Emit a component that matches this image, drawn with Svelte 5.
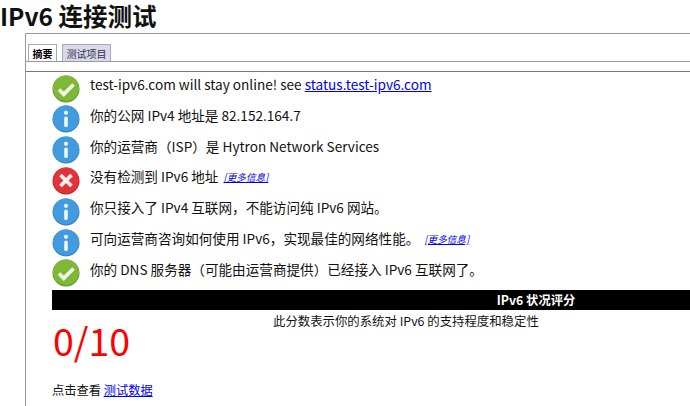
<script>
  const rows = [
    { icon: 'ok', text: 'test-ipv6.com will stay online! see ', link: 'status.test-ipv6.com' },
    { icon: 'info', text: '你的公网 IPv4 地址是 82.152.164.7' },
    { icon: 'info', text: '你的运营商（ISP）是 Hytron Network Services' },
    { icon: 'bad', text: '没有检测到 IPv6 地址', more: true },
    { icon: 'info', text: '你只接入了 IPv4 互联网，不能访问纯 IPv6 网站。' },
    { icon: 'info', text: '可向运营商咨询如何使用 IPv6，实现最佳的网络性能。', more: true },
    { icon: 'ok', text: '你的 DNS 服务器（可能由运营商提供）已经接入 IPv6 互联网了。' }
  ];
  const fills = { ok: '#7fb836', info: '#439bdf', bad: '#e4323a' };
  const shades = { ok: '#5f9427', info: '#2f7fc0', bad: '#bd1f25' };
</script>

<h1>IPv6 连接测试</h1>

<div class="panel">
  <ul class="tabs">
    <li class="tab active">摘要</li>
    <li class="tab">测试项目</li>
  </ul>
  <div class="content">
    {#each rows as row}
      <div class="row">
        <svg class="icon" viewBox="0 0 28 28" width="28" height="28">
          <circle cx="14" cy="14" r="13.5" fill={shades[row.icon]} />
          <circle cx="14" cy="13.4" r="13" fill={fills[row.icon]} />
          {#if row.icon === 'ok'}
            <path d="M7 14.5l4.8 4.8L21.5 9.5" fill="none" stroke="#f1f6ea" stroke-width="3.8" />
          {:else if row.icon === 'info'}
            <circle cx="14" cy="7.8" r="2.1" fill="#eef6fc" />
            <rect x="12.2" y="11.5" width="3.6" height="10.5" rx="1.6" fill="#eef6fc" />
          {:else}
            <path d="M8.5 8l11 11M19.5 8l-11 11" fill="none" stroke="#fdf0f0" stroke-width="3.8" />
          {/if}
        </svg>
        <span class="text">{row.text}{#if row.link}<a href="#top">{row.link}</a>{/if}</span>
        {#if row.more}<a class="more" href="#top">[更多信息]</a>{/if}
      </div>
    {/each}

    <div class="bar">IPv6 状况评分</div>
    <div class="score">
      <div class="num">0/10</div>
      <div class="desc">此分数表示你的系统对 IPv6 的支持程度和稳定性</div>
    </div>
    <p class="foot">点击查看 <a href="#top">测试数据</a></p>
  </div>
</div>

<style>
  :global(body) {
    margin: 0;
    background: #fff;
    overflow: hidden;
    font-family: "Noto Sans CJK SC", sans-serif;
    color: #111;
  }

  h1 {
    margin: 0;
    height: 33px;
    font-size: 24.5px;
    line-height: 31px;
    font-weight: 700;
    color: #111;
    white-space: nowrap;
  }

  .panel {
    width: 994px;
    margin-left: 25px;
    border-left: 1px solid #999;
    border-top: 1px solid #999;
    height: 373px;
  }

  .tabs {
    display: flex;
    gap: 5px;
    list-style: none;
    margin: 0;
    padding: 10px 0 0 2px;
    height: 17px;
    border-bottom: 1px solid #999;
  }

  .tab {
    height: 16px;
    padding: 0 3.5px;
    border: 1px solid #aaa;
    border-bottom: none;
    background: #d8d8ea;
    color: #334;
    font-size: 10px;
    line-height: 17px;
  }

  .tab.active {
    background: #fff;
    color: #000;
    font-weight: 700;
  }

  .content {
    margin-top: 9px;
    border-top: 1px solid #777;
    padding: 1.3px 0 0 26px;
  }

  .row {
    display: flex;
    align-items: center;
    height: 30.8px;
    white-space: nowrap;
  }

  .icon {
    flex: none;
    margin: 0 10px 0 0;
  }

  .text {
    font-size: 13.6px;
    line-height: 20px;
    position: relative;
    top: -4.6px;
  }

  a {
    color: #00e;
  }

  .more {
    margin-left: 5px;
    font-size: 9.6px;
    font-style: italic;
    position: relative;
    top: -3.6px;
  }

  .bar {
    height: 20px;
    margin-top: 1.1px;
    background: #000;
    color: #fff;
    font-size: 12.3px;
    font-weight: 700;
    line-height: 21px;
    text-align: center;
  }

  .score {
    display: grid;
    grid-template-columns: 221px 265px;
  }

  .num {
    color: #f00;
    font-size: 37.5px;
    line-height: 50px;
    margin-top: 5px;
    padding-left: 1px;
  }

  .desc {
    font-size: 12.4px;
    line-height: 22px;
    text-align: center;
    white-space: nowrap;
  }

  .foot {
    margin: 16px 0 0;
    font-size: 12.24px;
    line-height: 18px;
  }
</style>
